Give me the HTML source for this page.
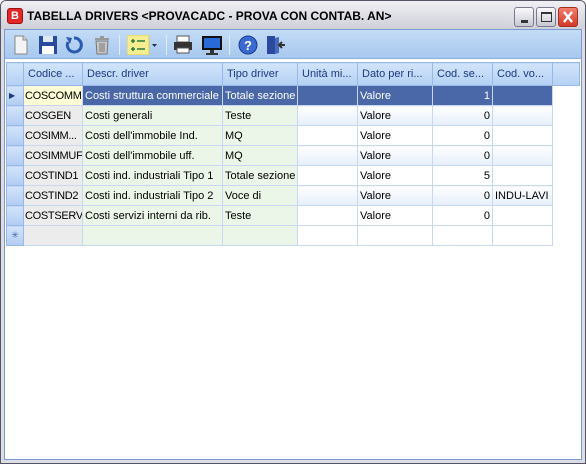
<!DOCTYPE html>
<html><head><style>
*{margin:0;padding:0;box-sizing:border-box}
body{width:586px;height:464px;overflow:hidden;font-family:"Liberation Sans",sans-serif;font-size:11px;background:#fff;position:relative}
.frame{position:absolute;left:0;top:0;width:586px;height:464px;border:1px solid #555566;background:#dcdce4;border-radius:6px 6px 0 0}
.title{position:absolute;left:1px;top:1px;width:584px;height:28px;background:linear-gradient(#f0f0f4,#dcdce4 60%,#d0d0da);border-radius:5px 5px 0 0}
.title .t{position:absolute;left:26px;top:8px;font-weight:bold;font-size:12px;color:#000;font-family:"Liberation Sans",sans-serif;white-space:nowrap}
.logo{position:absolute;left:6px;top:7px;width:16px;height:16px;background:#e02828;border-radius:3px;color:#fff;font-weight:bold;font-size:11px;text-align:center;line-height:15px;border:1px solid #a01010}
.btn{position:absolute;top:6px;width:20px;height:20px;border:1px solid #7a7a8e;border-radius:3px;background:linear-gradient(#fafafc,#c8c8d4)}
.close{background:linear-gradient(#f08070,#d03828);border-color:#a03020}
.content{position:absolute;left:4px;top:29px;width:578px;height:431px;background:#fff;border:1px solid #7a9ad0}
.tb{position:absolute;left:0;top:0;width:576px;height:29px;background:linear-gradient(#c4dcf6,#a8c8ee);border-bottom:1px solid #90b0e0}
.ic{position:absolute;top:5px}
.sep{position:absolute;top:5px;width:1px;height:20px;background:#7c9cc8;border-right:1px solid #e0ecfa}
.grid{position:absolute;left:1px;top:32px}
table{border-collapse:collapse;table-layout:fixed;width:573px}
td{height:20px;border:1px solid #c8d8f0;padding:0 2px;white-space:nowrap;overflow:hidden;font-size:11px;color:#000}
tr.h td{height:23px;background:linear-gradient(#d2e4fa,#b4d0f4);border:1px solid #98b8e8;color:#1a3a80;padding-left:4px}
td.sel{background:linear-gradient(#d4e4fa,#b0ccf2);border-color:#98b8e8}
td.c{background:#ececec;padding:0 1px;letter-spacing:-0.3px}
td.g{background:#ecf6e8}
tr.s td{background:#4a68a8;color:#fff}
tr.s td.c{background:#ffffd8;color:#000;border:1px dotted #888}
tr.s td.sel{background:linear-gradient(#d4e4fa,#b0ccf2)}
tr.a td.w{background:linear-gradient(#fff,#e6eefa)}
td.r{text-align:right}
tr td.n{border:none;background:#fff}
</style></head><body>
<div class="frame"></div>
<div class="title"><div class="logo">B</div><div class="t">TABELLA DRIVERS &lt;PROVACADC - PROVA CON CONTAB. AN&gt;</div>
<div class="btn" style="left:513px"><div style="position:absolute;left:6px;top:12px;width:7px;height:3px;background:#333"></div></div>
<div class="btn" style="left:535px"><div style="position:absolute;left:4px;top:4px;width:11px;height:10px;border:1px solid #333;border-top-width:2px"></div></div>
<div class="btn close" style="left:557px"><svg width="18" height="18" style="position:absolute;left:0;top:0"><path d="M5 4 L13 14 M13 4 L5 14" stroke="#fff" stroke-width="2.4"/></svg></div>
</div>
<div class="content">
<div class="tb">
<svg class="ic" style="left:8px" width="16" height="20"><path d="M2 1h8l4 4v14H2z" fill="#f4f4f4" stroke="#888"/><path d="M10 1v4h4" fill="#ddd" stroke="#888"/></svg>
<svg class="ic" style="left:33px" width="20" height="20"><rect x="1" y="1" width="18" height="18" fill="#2a4aa0"/><rect x="5" y="1" width="10" height="6" fill="#e0e8f4"/><rect x="4" y="11" width="12" height="8" fill="#fff"/></svg>
<svg class="ic" style="left:60px" width="18" height="20"><path d="M9 3a7 7 0 1 1-6 4" fill="none" stroke="#2a5ab0" stroke-width="3"/><path d="M1 2l6 1-2 6z" fill="#2a5ab0"/></svg>
<svg class="ic" style="left:88px" width="18" height="20"><rect x="2" y="3" width="14" height="2" fill="#999"/><rect x="7" y="1" width="4" height="2" fill="#999"/><path d="M3 6h12l-1 13H4z" fill="#c8c8c8" stroke="#777"/><path d="M7 8v9M9 8v9M11 8v9" stroke="#777"/></svg>
<div class="sep" style="left:114px"></div>
<svg class="ic" style="left:122px" width="32" height="20"><rect x="0" y="0" width="22" height="20" fill="#f4ee90" stroke="#d8cc60"/><path d="M4 6h4M6 4v4M4 14h4M6 12v4M10 6h8M10 14h8" stroke="#2a7a3a" stroke-width="1.5"/><path d="M25 9h5l-2.5 3z" fill="#234"/></svg>
<div class="sep" style="left:161px"></div>
<svg class="ic" style="left:168px" width="20" height="20"><rect x="4" y="1" width="12" height="6" fill="#fff" stroke="#555"/><rect x="1" y="7" width="18" height="8" fill="#333"/><rect x="4" y="13" width="12" height="5" fill="#fff" stroke="#555"/></svg>
<svg class="ic" style="left:197px" width="20" height="20"><rect x="0" y="1" width="20" height="14" fill="#111"/><rect x="2" y="3" width="16" height="10" fill="#2a6ad8"/><rect x="8" y="15" width="4" height="3" fill="#333"/><rect x="4" y="18" width="12" height="2" fill="#333"/></svg>
<div class="sep" style="left:224px"></div>
<svg class="ic" style="left:233px" width="20" height="20"><circle cx="10" cy="10" r="9" fill="#3a6ad0" stroke="#1a3a90"/><text x="10" y="15" font-size="13" font-weight="bold" fill="#fff" text-anchor="middle" font-family="Liberation Sans">?</text></svg>
<svg class="ic" style="left:261px" width="20" height="20"><rect x="1" y="1" width="8" height="18" fill="#2a4aa0"/><path d="M9 3l4 -1v16l-4 1z" fill="#4a6ac0"/><path d="M19 10h-5M16 7l-3 3 3 3" stroke="#333" stroke-width="2" fill="none"/></svg>
</div>
<div class="grid">
<table>
<colgroup><col style="width:17px"><col style="width:59px"><col style="width:140px"><col style="width:75px"><col style="width:60px"><col style="width:75px"><col style="width:60px"><col style="width:60px"><col style="width:27px"></colgroup>
<tr class="h"><td class="sel"></td><td>Codice ...</td><td>Descr. driver</td><td>Tipo driver</td><td>Unità mi...</td><td>Dato per ri...</td><td>Cod. se...</td><td>Cod. vo...</td><td></td></tr>
<tr class="s"><td class="sel" style="color:#1a3a80;font-size:8px">&#9654;</td><td class="c">COSCOMM</td><td>Costi struttura commerciale</td><td>Totale sezione</td><td></td><td>Valore</td><td class="r">1</td><td></td><td class="n"></td></tr>
<tr class="a"><td class="sel"></td><td class="c">COSGEN</td><td class="g">Costi generali</td><td class="g">Teste</td><td class="w"></td><td class="w">Valore</td><td class="w r">0</td><td class="w"></td><td class="n"></td></tr>
<tr><td class="sel"></td><td class="c">COSIMM...</td><td class="g">Costi dell'immobile Ind.</td><td class="g">MQ</td><td></td><td>Valore</td><td class="r">0</td><td></td><td class="n"></td></tr>
<tr class="a"><td class="sel"></td><td class="c">COSIMMUF</td><td class="g">Costi dell'immobile uff.</td><td class="g">MQ</td><td class="w"></td><td class="w">Valore</td><td class="w r">0</td><td class="w"></td><td class="n"></td></tr>
<tr><td class="sel"></td><td class="c">COSTIND1</td><td class="g">Costi ind. industriali Tipo 1</td><td class="g">Totale sezione</td><td></td><td>Valore</td><td class="r">5</td><td></td><td class="n"></td></tr>
<tr class="a"><td class="sel"></td><td class="c">COSTIND2</td><td class="g">Costi ind. industriali Tipo 2</td><td class="g">Voce di</td><td class="w"></td><td class="w">Valore</td><td class="w r">0</td><td class="w">INDU-LAVI</td><td class="n"></td></tr>
<tr><td class="sel"></td><td class="c">COSTSERV</td><td class="g">Costi servizi interni da rib.</td><td class="g">Teste</td><td></td><td>Valore</td><td class="r">0</td><td></td><td class="n"></td></tr>
<tr><td class="sel" style="color:#4a68a8;font-size:9px;text-align:center">&#10035;</td><td class="c"></td><td class="g"></td><td class="g"></td><td></td><td></td><td></td><td></td><td class="n"></td></tr>
</table>
</div>
</div>
</body></html>
